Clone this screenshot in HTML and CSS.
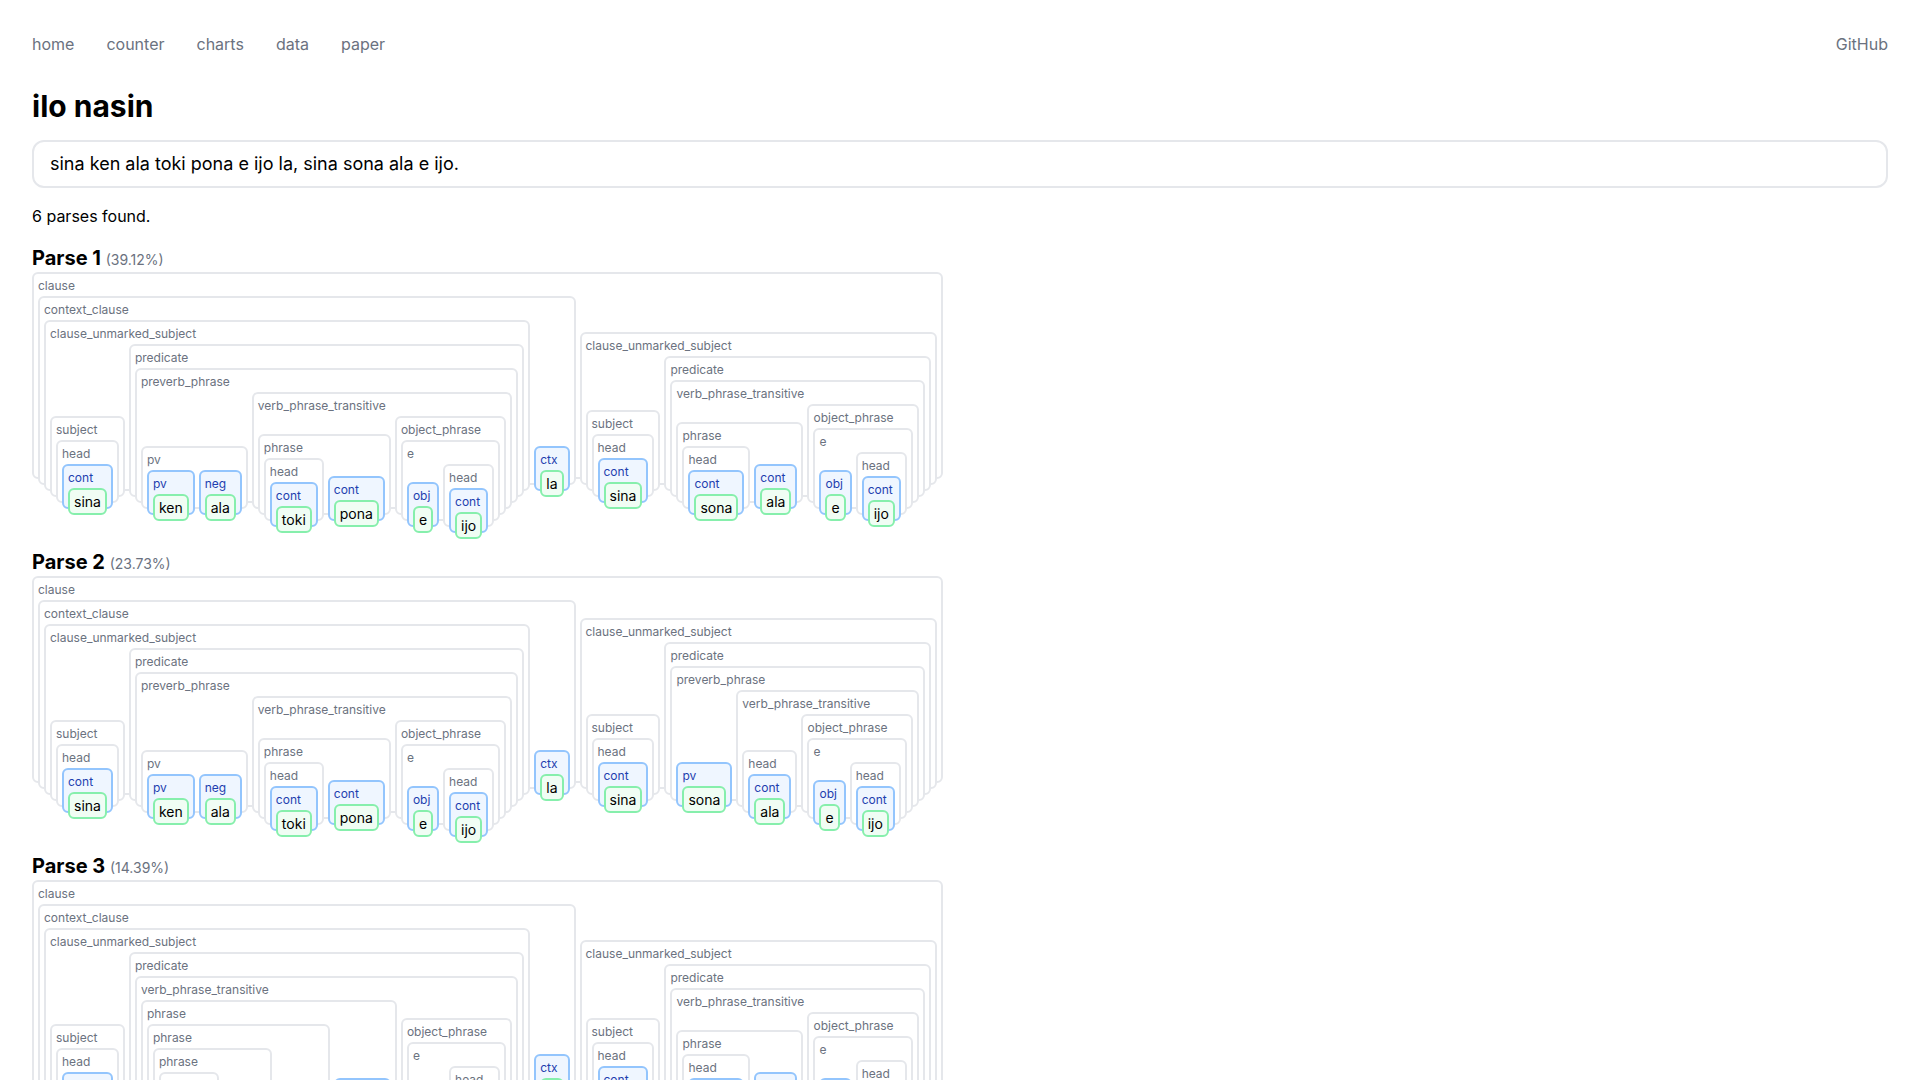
FILE: index.html
```html
<!DOCTYPE html>
<html lang="en">
<head>
<meta charset="utf-8">
<title>ilo nasin</title>
<link rel="stylesheet" href="styles.css">
</head>
<body>
<nav class="nav">
  <div class="nav-left">
    <a href="#">home</a><a href="#">counter</a><a href="#">charts</a><a href="#">data</a><a href="#">paper</a>
  </div>
  <a href="#">GitHub</a>
</nav>
<h1 class="title">ilo nasin</h1>
<input class="query" type="text" value="sina ken ala toki pona e ijo la, sina sona ala e ijo.">
<p class="count">6 parses found.</p>

<section class="parse">
  <h2 class="parse-title">Parse 1 <span class="score">(39.12%)</span></h2>
  <div class="box"><span class="label">clause</span><div class="kids">
    <div class="box"><span class="label">context_clause</span><div class="kids">
      <div class="box"><span class="label">clause_unmarked_subject</span><div class="kids">
        <div class="box"><span class="label">subject</span><div class="kids"><div class="box"><span class="label">head</span><div class="kids"><div class="box tag"><span class="label">cont</span><div class="kids"><span class="leaf">sina</span></div></div></div></div></div></div>
        <div class="box"><span class="label">predicate</span><div class="kids">
          <div class="box"><span class="label">preverb_phrase</span><div class="kids">
            <div class="box"><span class="label">pv</span><div class="kids">
              <div class="box tag"><span class="label">pv</span><div class="kids"><span class="leaf">ken</span></div></div>
              <div class="box tag"><span class="label">neg</span><div class="kids"><span class="leaf">ala</span></div></div>
            </div></div>
            <div class="box"><span class="label">verb_phrase_transitive</span><div class="kids">
              <div class="box"><span class="label">phrase</span><div class="kids">
                <div class="box"><span class="label">head</span><div class="kids"><div class="box tag"><span class="label">cont</span><div class="kids"><span class="leaf">toki</span></div></div></div></div>
                <div class="box tag"><span class="label">cont</span><div class="kids"><span class="leaf">pona</span></div></div>
              </div></div>
              <div class="box"><span class="label">object_phrase</span><div class="kids"><div class="box"><span class="label">e</span><div class="kids">
                <div class="box tag"><span class="label">obj</span><div class="kids"><span class="leaf">e</span></div></div>
                <div class="box"><span class="label">head</span><div class="kids"><div class="box tag"><span class="label">cont</span><div class="kids"><span class="leaf">ijo</span></div></div></div></div>
              </div></div></div></div>
            </div></div>
          </div></div>
        </div></div>
      </div></div>
      <div class="box tag"><span class="label">ctx</span><div class="kids"><span class="leaf">la</span></div></div>
    </div></div>
    <div class="box"><span class="label">clause_unmarked_subject</span><div class="kids">
      <div class="box"><span class="label">subject</span><div class="kids"><div class="box"><span class="label">head</span><div class="kids"><div class="box tag"><span class="label">cont</span><div class="kids"><span class="leaf">sina</span></div></div></div></div></div></div>
      <div class="box"><span class="label">predicate</span><div class="kids">
        <div class="box"><span class="label">verb_phrase_transitive</span><div class="kids">
          <div class="box"><span class="label">phrase</span><div class="kids">
            <div class="box"><span class="label">head</span><div class="kids"><div class="box tag"><span class="label">cont</span><div class="kids"><span class="leaf">sona</span></div></div></div></div>
            <div class="box tag"><span class="label">cont</span><div class="kids"><span class="leaf">ala</span></div></div>
          </div></div>
          <div class="box"><span class="label">object_phrase</span><div class="kids"><div class="box"><span class="label">e</span><div class="kids">
            <div class="box tag"><span class="label">obj</span><div class="kids"><span class="leaf">e</span></div></div>
            <div class="box"><span class="label">head</span><div class="kids"><div class="box tag"><span class="label">cont</span><div class="kids"><span class="leaf">ijo</span></div></div></div></div>
          </div></div></div></div>
        </div></div>
      </div></div>
    </div></div>
  </div></div>
</section>

<section class="parse">
  <h2 class="parse-title">Parse 2 <span class="score">(23.73%)</span></h2>
  <div class="box"><span class="label">clause</span><div class="kids">
    <div class="box"><span class="label">context_clause</span><div class="kids">
      <div class="box"><span class="label">clause_unmarked_subject</span><div class="kids">
        <div class="box"><span class="label">subject</span><div class="kids"><div class="box"><span class="label">head</span><div class="kids"><div class="box tag"><span class="label">cont</span><div class="kids"><span class="leaf">sina</span></div></div></div></div></div></div>
        <div class="box"><span class="label">predicate</span><div class="kids">
          <div class="box"><span class="label">preverb_phrase</span><div class="kids">
            <div class="box"><span class="label">pv</span><div class="kids">
              <div class="box tag"><span class="label">pv</span><div class="kids"><span class="leaf">ken</span></div></div>
              <div class="box tag"><span class="label">neg</span><div class="kids"><span class="leaf">ala</span></div></div>
            </div></div>
            <div class="box"><span class="label">verb_phrase_transitive</span><div class="kids">
              <div class="box"><span class="label">phrase</span><div class="kids">
                <div class="box"><span class="label">head</span><div class="kids"><div class="box tag"><span class="label">cont</span><div class="kids"><span class="leaf">toki</span></div></div></div></div>
                <div class="box tag"><span class="label">cont</span><div class="kids"><span class="leaf">pona</span></div></div>
              </div></div>
              <div class="box"><span class="label">object_phrase</span><div class="kids"><div class="box"><span class="label">e</span><div class="kids">
                <div class="box tag"><span class="label">obj</span><div class="kids"><span class="leaf">e</span></div></div>
                <div class="box"><span class="label">head</span><div class="kids"><div class="box tag"><span class="label">cont</span><div class="kids"><span class="leaf">ijo</span></div></div></div></div>
              </div></div></div></div>
            </div></div>
          </div></div>
        </div></div>
      </div></div>
      <div class="box tag"><span class="label">ctx</span><div class="kids"><span class="leaf">la</span></div></div>
    </div></div>
    <div class="box"><span class="label">clause_unmarked_subject</span><div class="kids">
      <div class="box"><span class="label">subject</span><div class="kids"><div class="box"><span class="label">head</span><div class="kids"><div class="box tag"><span class="label">cont</span><div class="kids"><span class="leaf">sina</span></div></div></div></div></div></div>
      <div class="box"><span class="label">predicate</span><div class="kids">
        <div class="box"><span class="label">preverb_phrase</span><div class="kids">
          <div class="box tag"><span class="label">pv</span><div class="kids"><span class="leaf">sona</span></div></div>
          <div class="box"><span class="label">verb_phrase_transitive</span><div class="kids">
            <div class="box"><span class="label">head</span><div class="kids"><div class="box tag"><span class="label">cont</span><div class="kids"><span class="leaf">ala</span></div></div></div></div>
            <div class="box"><span class="label">object_phrase</span><div class="kids"><div class="box"><span class="label">e</span><div class="kids">
              <div class="box tag"><span class="label">obj</span><div class="kids"><span class="leaf">e</span></div></div>
              <div class="box"><span class="label">head</span><div class="kids"><div class="box tag"><span class="label">cont</span><div class="kids"><span class="leaf">ijo</span></div></div></div></div>
            </div></div></div></div>
          </div></div>
        </div></div>
      </div></div>
    </div></div>
  </div></div>
</section>

<section class="parse">
  <h2 class="parse-title">Parse 3 <span class="score">(14.39%)</span></h2>
  <div class="box"><span class="label">clause</span><div class="kids">
    <div class="box"><span class="label">context_clause</span><div class="kids">
      <div class="box"><span class="label">clause_unmarked_subject</span><div class="kids">
        <div class="box"><span class="label">subject</span><div class="kids"><div class="box"><span class="label">head</span><div class="kids"><div class="box tag"><span class="label">cont</span><div class="kids"><span class="leaf">sina</span></div></div></div></div></div></div>
        <div class="box"><span class="label">predicate</span><div class="kids">
          <div class="box"><span class="label">verb_phrase_transitive</span><div class="kids">
            <div class="box"><span class="label">phrase</span><div class="kids">
              <div class="box"><span class="label">phrase</span><div class="kids">
                <div class="box"><span class="label">phrase</span><div class="kids">
                  <div class="box"><span class="label">head</span><div class="kids"><div class="box tag"><span class="label">cont</span><div class="kids"><span class="leaf">ken</span></div></div></div></div>
                  <div class="box tag"><span class="label">cont</span><div class="kids"><span class="leaf">ala</span></div></div>
                </div></div>
                <div class="box tag"><span class="label">cont</span><div class="kids"><span class="leaf">toki</span></div></div>
              </div></div>
              <div class="box tag"><span class="label">cont</span><div class="kids"><span class="leaf">pona</span></div></div>
            </div></div>
            <div class="box"><span class="label">object_phrase</span><div class="kids"><div class="box"><span class="label">e</span><div class="kids">
              <div class="box tag"><span class="label">obj</span><div class="kids"><span class="leaf">e</span></div></div>
              <div class="box"><span class="label">head</span><div class="kids"><div class="box tag"><span class="label">cont</span><div class="kids"><span class="leaf">ijo</span></div></div></div></div>
            </div></div></div></div>
          </div></div>
        </div></div>
      </div></div>
      <div class="box tag"><span class="label">ctx</span><div class="kids"><span class="leaf">la</span></div></div>
    </div></div>
    <div class="box"><span class="label">clause_unmarked_subject</span><div class="kids">
      <div class="box"><span class="label">subject</span><div class="kids"><div class="box"><span class="label">head</span><div class="kids"><div class="box tag"><span class="label">cont</span><div class="kids"><span class="leaf">sina</span></div></div></div></div></div></div>
      <div class="box"><span class="label">predicate</span><div class="kids">
        <div class="box"><span class="label">verb_phrase_transitive</span><div class="kids">
          <div class="box"><span class="label">phrase</span><div class="kids">
            <div class="box"><span class="label">head</span><div class="kids"><div class="box tag"><span class="label">cont</span><div class="kids"><span class="leaf">sona</span></div></div></div></div>
            <div class="box tag"><span class="label">cont</span><div class="kids"><span class="leaf">ala</span></div></div>
          </div></div>
          <div class="box"><span class="label">object_phrase</span><div class="kids"><div class="box"><span class="label">e</span><div class="kids">
            <div class="box tag"><span class="label">obj</span><div class="kids"><span class="leaf">e</span></div></div>
            <div class="box"><span class="label">head</span><div class="kids"><div class="box tag"><span class="label">cont</span><div class="kids"><span class="leaf">ijo</span></div></div></div></div>
          </div></div></div></div>
        </div></div>
      </div></div>
    </div></div>
  </div></div>
</section>
</body>
</html>
```

FILE: styles.css
```css
html {
  height: 100%;
  overflow: hidden;
}
body {
  margin: 0;
  padding: 32px;
  background: #fff;
  color: #000;
  font-family: Inter, "Liberation Sans", sans-serif;
  font-size: 16px;
  line-height: 24px;
}
.nav {
  display: flex;
  justify-content: space-between;
  margin-bottom: 32px;
}
.nav-left {
  display: flex;
  gap: 32px;
}
.nav a {
  color: #6b7280;
  text-decoration: none;
}
.title {
  margin: 0 0 16px;
  font-size: 30px;
  line-height: 36px;
  font-weight: 700;
}
.query {
  display: block;
  box-sizing: border-box;
  width: 100%;
  height: 48px;
  margin: 0 0 16px;
  padding: 6px 16px 8px;
  border: 2px solid #e5e7eb;
  border-radius: 12px;
  outline: none;
  font: 18px/28px Inter, "Liberation Sans", sans-serif;
  color: #000;
}
.count {
  margin: 0 0 16px;
}
.parse {
  margin-bottom: 69px;
}
.parse-title {
  margin: 0;
  font-size: 20px;
  line-height: 28px;
  font-weight: 700;
}
.score {
  font-size: 14px;
  line-height: 20px;
  font-weight: 400;
  color: #6b7280;
}
.box {
  width: fit-content;
  padding: 4px 4px 4px;
  border: 2px solid #e5e7eb;
  border-radius: 6px;
  background: #fff;
}
.label {
  display: block;
  margin-bottom: 2px;
  font-size: 12px;
  line-height: 16px;
  color: #6b7280;
}
.kids {
  display: flex;
  align-items: flex-end;
  gap: 4px;
  margin-bottom: -12px;
}
.tag {
  border-color: #93c5fd;
  background: #eff6ff;
}
.tag > .label {
  color: #1e40af;
}
.leaf {
  display: block;
  padding: 2px 4px 1px;
  border: 2px solid #86efac;
  border-radius: 6px;
  background: #f0fdf4;
  font-size: 14px;
  line-height: 20px;
  color: #000;
}
```
